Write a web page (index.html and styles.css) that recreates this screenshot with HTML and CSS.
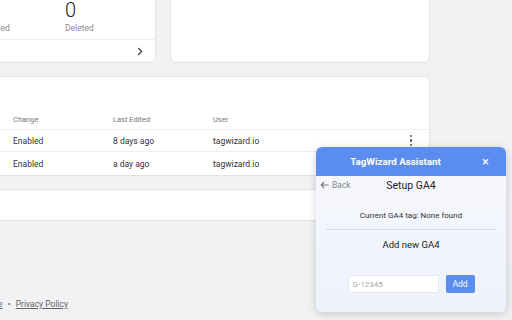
FILE: index.html
```html
<!DOCTYPE html>
<html lang="en">
<head>
    <meta charset="UTF-8">
    <meta name="viewport" content="width=device-width, initial-scale=1.0">
    <title>TagWizard</title>
    <link rel="stylesheet" href="styles.css">
</head>
<body>
    <div class="page">
        <div class="top-row">
            <div class="card stats-card">
                <div class="stats">
                    <div class="stat">
                        <div class="stat-num">2</div>
                        <div class="stat-label">Enabled</div>
                    </div>
                    <div class="stat wide">
                        <div class="stat-num">0</div>
                        <div class="stat-label">Disabled</div>
                    </div>
                    <div class="stat">
                        <div class="stat-num">0</div>
                        <div class="stat-label">Deleted</div>
                    </div>
                </div>
                <div class="stats-footer">
                    <svg class="chevron" width="6" height="9" viewBox="0 0 6 9">
                        <path d="M1.2 1 L4.6 4.5 L1.2 8" fill="none" stroke="#444" stroke-width="1.3"/>
                    </svg>
                </div>
            </div>
            <div class="card blank-card"></div>
        </div>

        <div class="card table-card">
            <div class="table-head row">
                <div>Tag</div>
                <div>Change</div>
                <div>Last Edited</div>
                <div>User</div>
                <div></div>
            </div>
            <div class="row">
                <div>Google Analytics</div>
                <div>Enabled</div>
                <div>8 days ago</div>
                <div>tagwizard.io</div>
                <div class="kebab"><span></span><span></span><span></span></div>
            </div>
            <div class="row">
                <div>Meta Pixel</div>
                <div>Enabled</div>
                <div>a day ago</div>
                <div>tagwizard.io</div>
                <div></div>
            </div>
        </div>

        <div class="card strip-card"></div>

        <div class="footer">
            <a href="#">Terms of Service</a>
            <span class="dot">&bull;</span>
            <a href="#">Privacy Policy</a>
        </div>
    </div>

    <div class="assistant">
        <div class="assistant-header">
            <div class="assistant-title">TagWizard Assistant</div>
            <button class="close-btn">&times;</button>
        </div>
        <div class="assistant-body">
            <div class="nav-row">
                <button class="back-btn">
                    <svg width="9" height="8" viewBox="0 0 9 8">
                        <path d="M8.5 4 H1.2 M4.2 1 L1.2 4 L4.2 7" fill="none" stroke="#777" stroke-width="1.1"/>
                    </svg>
                    Back
                </button>
                <div class="step-title">Setup GA4</div>
            </div>
            <div class="current">Current GA4 tag: None found</div>
            <div class="divider"></div>
            <div class="add-title">Add new GA4</div>
            <div class="add-form">
                <input class="ga-input" type="text" placeholder="G-12345">
                <button class="add-btn">Add</button>
            </div>
        </div>
    </div>
</body>
</html>
```

FILE: styles.css
```css
body {
    margin: 0;
    height: 320px;
    overflow: hidden;
    background-color: #f1f2f4;
    font-family: Roboto, "Liberation Sans", sans-serif;
    color: #333;
}

.page {
    width: 550px;
    margin-left: -120px;
}

.card {
    background: white;
    border: 1px solid #e2e3e8;
    border-radius: 6px;
}

.top-row {
    display: flex;
    gap: 14px;
    margin-top: -40px;
}

.stats-card {
    width: 276px;
}

.blank-card {
    width: 260px;
}

.stats {
    display: flex;
    padding: 37px 0 5px 16px;
}

.stat {
    width: 80px;
}

.stat.wide {
    width: 88px;
}

.stat-num {
    font-size: 20px;
    line-height: 24px;
    font-weight: 300;
    color: #222;
}

.stat-label {
    font-size: 8.5px;
    line-height: 12px;
    color: #888;
}

.stats-footer {
    display: flex;
    justify-content: flex-end;
    align-items: center;
    height: 22px;
    padding-right: 12px;
    border-top: 1px solid #eceef1;
}

.table-card {
    margin-top: 13px;
    padding-top: 32px;
}

.row {
    display: grid;
    grid-template-columns: 100px 100px 100px 100px 1fr;
    align-items: center;
    height: 21px;
    padding: 0 16px 0 32px;
    font-size: 8.5px;
    color: #333;
    border-bottom: 1px solid #eceef1;
}

.row:last-child {
    border-bottom: none;
    height: 23px;
}

.table-head {
    height: 20px;
    font-size: 7.5px;
    color: #777;
}

.kebab {
    display: flex;
    flex-direction: column;
    align-items: flex-end;
    gap: 2px;
}

.kebab span {
    width: 2.5px;
    height: 2.5px;
    margin-right: 1px;
    border-radius: 50%;
    background: #555;
}

.strip-card {
    height: 30px;
    margin-top: 13px;
    border-radius: 0;
}

.footer {
    margin-top: 77px;
    padding-left: 59px;
    font-size: 8.5px;
    line-height: 12px;
    color: #666;
}

.footer a {
    color: #666;
}

.dot {
    margin: 0 3px;
}

.assistant {
    position: absolute;
    left: 316px;
    top: 147px;
    width: 190px;
    height: 165px;
    border-radius: 6px;
    overflow: hidden;
    background: linear-gradient(180deg, #f8f9fd, #eef2fc);
    box-shadow: 0 2px 10px rgba(0, 0, 0, 0.18);
}

.assistant-header {
    display: flex;
    align-items: center;
    height: 29px;
    padding: 0 10px 0 0;
    background: #5b8def;
}

.assistant-title {
    flex: 1;
    text-align: center;
    font-size: 9.8px;
    font-weight: bold;
    color: white;
}

.close-btn {
    width: 21px;
    padding: 0;
    border: none;
    background: none;
    color: white;
    font-size: 13px;
    line-height: 14px;
    font-family: inherit;
}

.assistant-body {
    padding: 2px 10px 0;
}

.nav-row {
    position: relative;
    display: flex;
    align-items: center;
    height: 14px;
}

.back-btn {
    display: flex;
    align-items: center;
    gap: 3px;
    padding: 0;
    margin-left: -6px;
    border: none;
    background: none;
    font-family: inherit;
    font-size: 8.5px;
    color: #888;
}

.step-title {
    position: absolute;
    left: 0;
    right: 0;
    text-align: center;
    font-size: 10.5px;
    color: #222;
    pointer-events: none;
}

.current {
    margin-top: 18px;
    text-align: center;
    font-size: 8px;
    line-height: 12px;
    color: #333;
}

.divider {
    height: 1px;
    margin-top: 7px;
    background: #d9dce4;
}

.add-title {
    margin-top: 8px;
    text-align: center;
    font-size: 9.5px;
    line-height: 14px;
    color: #222;
}

.add-form {
    display: flex;
    justify-content: center;
    gap: 7px;
    margin-top: 23px;
}

.ga-input {
    box-sizing: border-box;
    width: 91px;
    height: 18px;
    padding: 0 4px;
    border: 1px solid #e4e7ee;
    border-radius: 2px;
    font-family: inherit;
    font-size: 8px;
    color: #333;
    outline: none;
}

.ga-input::placeholder {
    color: #aaa;
}

.add-btn {
    width: 29px;
    height: 18px;
    padding: 0;
    border: none;
    border-radius: 2px;
    background: #5b8def;
    color: white;
    font-family: inherit;
    font-size: 8.5px;
}
```
